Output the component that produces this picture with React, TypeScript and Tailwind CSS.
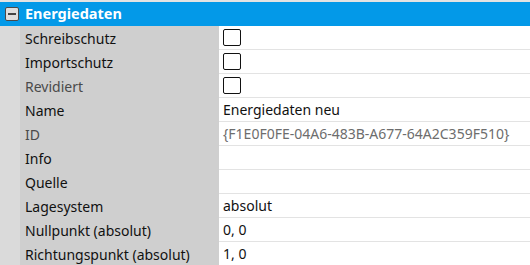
import React from 'react';

type Row = { label: string; value?: string; check?: boolean; muted?: boolean };

const rows: Row[] = [
  { label: 'Schreibschutz', check: true },
  { label: 'Importschutz', check: true },
  { label: 'Revidiert', check: true, muted: true },
  { label: 'Name', value: 'Energiedaten neu' },
  { label: 'ID', value: '{F1E0F0FE-04A6-483B-A677-64A2C359F510}', muted: true },
  { label: 'Info', value: '' },
  { label: 'Quelle', value: '' },
  { label: 'Lagesystem', value: 'absolut' },
  { label: 'Nullpunkt (absolut)', value: '0, 0' },
  { label: 'Richtungspunkt (absolut)', value: '1, 0' },
];

const App: React.FC = () => {
  return (
    <div className="w-[530px] h-[265px] overflow-hidden pt-[2px] bg-[#e3e3e3] text-[14px]" style={{ fontFamily: '"Segoe UI", "Noto Sans", sans-serif' }}>
      <div className="h-[24px] bg-[#0399e8] flex items-center">
        <div className="ml-[5px] w-[14px] h-[14px] rounded-[2px] border border-[#4a4a4a] bg-[#dedede] flex items-center justify-center">
          <div className="w-[8px] h-[2px] bg-[#444]" />
        </div>
        <span className="ml-[6px] font-bold text-white text-[14.5px]">Energiedaten</span>
      </div>
      {rows.map((r) => (
        <div key={r.label} className="flex h-[24px]">
          <div className="w-[20px] bg-[#dadada]" />
          <div className={`w-[199px] bg-[#cfcfcf] pl-[5px] flex items-center ${r.muted ? 'text-[#4a4a4a]' : 'text-[#111]'}`}>
            {r.label}
          </div>
          <div className="flex-1 bg-white border-b border-[#e3e3e3] flex items-center pl-[4px]">
            {r.check ? (
              <div className="w-[18px] h-[17px] rounded-[2px] border-[1.5px] border-[#111] bg-white" />
            ) : (
              <span className={r.muted ? 'text-[#6d6d6d]' : 'text-[#111]'}>{r.value}</span>
            )}
          </div>
        </div>
      ))}
    </div>
  );
};

export default App;
